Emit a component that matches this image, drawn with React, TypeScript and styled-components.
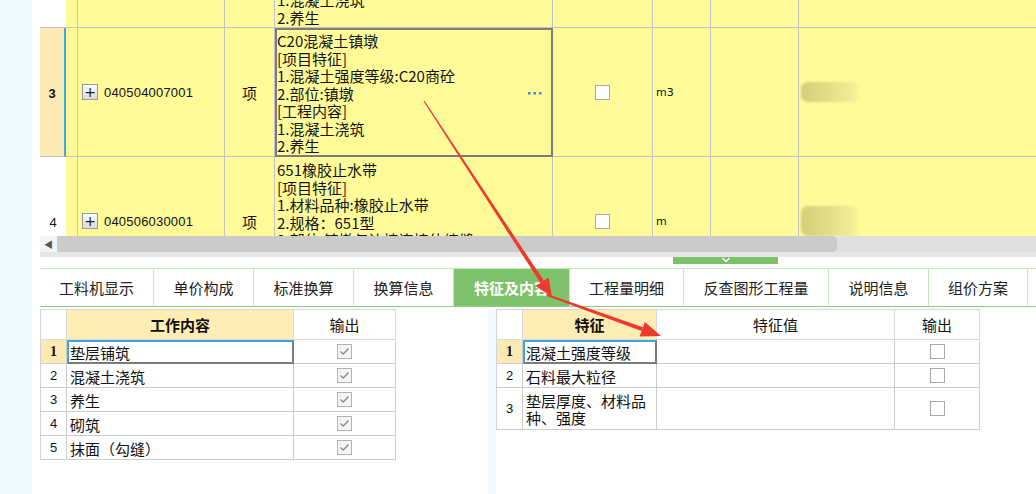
import React from 'react';
import styled, { createGlobalStyle } from 'styled-components';

const GlobalStyle = createGlobalStyle`
    html, body {
        margin: 0;
        padding: 0;
    }
    body {
        width: 1036px;
        height: 494px;
        overflow: hidden;
        background: #fff;
        color: #111;
        font-family: "Noto Sans CJK SC", "Liberation Sans", sans-serif;
    }
    * {
        box-sizing: border-box;
    }
`

const GRID_LINE = '#c3c3c3';
const YELLOW = '#fffb99';
const ACTIVE_NO = '#fde9b4';
const TOP_COLS = '26px 12px 147px 50px 278px 100px 58px 88px 1fr';

const Page = styled.div`
    position: relative;
    display: flex;
    width: 1036px;
    height: 494px;
    overflow: hidden;
`
const SideStrip = styled.div`
    width: 32px;
    flex-shrink: 0;
    background: #eefaff;
`
const Main = styled.div`
    flex: 1;
    min-width: 0;
    display: flex;
    flex-direction: column;
    padding-left: 8px;
    background: #fff;
`

/* ---------- upper grid ---------- */

const GridViewport = styled.div`
    height: 236px;
    flex-shrink: 0;
    overflow: hidden;
    display: flex;
    flex-direction: column;
`
const GridRow = styled.div<{ $h: number }>`
    display: grid;
    grid-template-columns: ${TOP_COLS};
    height: ${p => p.$h}px;
    flex-shrink: 0;
`
const NumCell = styled.div<{ $active?: boolean }>`
    display: flex;
    align-items: center;
    justify-content: center;
    background: ${p => (p.$active ? ACTIVE_NO : '#fff')};
    border-bottom: 1px solid ${GRID_LINE};
    border-right: ${p => (p.$active ? '2px solid #3aa8da' : 'none')};
    font-family: "Liberation Sans", sans-serif;
    font-size: 13px;
    font-weight: ${p => (p.$active ? 700 : 400)};
    padding-top: 2px;
`
const Cell = styled.div<{ $align?: string }>`
    display: flex;
    align-items: center;
    justify-content: ${p => p.$align || 'flex-start'};
    background: ${YELLOW};
    border-right: 1px solid ${GRID_LINE};
    border-bottom: 1px solid ${GRID_LINE};
    overflow: hidden;
`
const LastCell = styled(Cell)`
    border-right: none;
    padding-left: 2px;
`
const ExpandBox = styled.span`
    width: 16px;
    height: 16px;
    margin-left: 4px;
    margin-right: 6px;
    flex-shrink: 0;
    display: flex;
    align-items: center;
    justify-content: center;
    border: 1px solid #9a9a9a;
    background: linear-gradient(#fafafa, #dcdcdc);
    color: #222;
    font-family: "DejaVu Sans", sans-serif;
    font-size: 14px;
    line-height: 1;
`
const CodeText = styled.span`
    font-family: "Liberation Sans", sans-serif;
    font-size: 13px;
    letter-spacing: 0.2px;
    padding-top: 1px;
`
const KindText = styled.span`
    font-size: 15px;
`
const UnitText = styled.span`
    padding-left: 3px;
    font-family: "DejaVu Sans", sans-serif;
    font-size: 11px;
`
const DescCell = styled.div<{ $selected?: boolean; $bottom?: boolean }>`
    display: flex;
    align-items: ${p => (p.$bottom ? 'flex-end' : 'flex-start')};
    background: ${YELLOW};
    overflow: hidden;
    ${p =>
        p.$selected
            ? `border: 2px solid #7c7c7c; padding: 2px 0 0 0;`
            : `border-right: 1px solid ${GRID_LINE};
               border-bottom: 1px solid ${GRID_LINE};
               padding: ${p.$bottom ? '0 0 1px 2px' : '4px 0 0 2px'};`}
`
const DescText = styled.div`
    flex: 1;
    font-size: 15px;
    line-height: 17.5px;
    white-space: pre;
    color: #141414;
`
const MoreDots = styled.svg`
    align-self: center;
    margin-right: 9px;
    flex-shrink: 0;
`
const TickBox = styled.span<{ $checked?: boolean }>`
    width: 15px;
    height: 15px;
    display: flex;
    align-items: center;
    justify-content: center;
    border: 1px solid ${p => (p.$checked ? '#b3b3b3' : '#a9a9a9')};
    background: ${p => (p.$checked ? '#f4f4f4' : '#fff')};
`
const Blur = styled.span<{ $h: number }>`
    width: 60px;
    height: ${p => p.$h}px;
    border-radius: 7px;
    background: linear-gradient(to right, #d4cf7b, #e2dd87 45%, #f1ed94 85%, ${YELLOW});
    filter: blur(1.2px);
`

/* ---------- scrollbar + splitter ---------- */

const ScrollArea = styled.div`
    height: 21px;
    flex-shrink: 0;
    display: flex;
    flex-direction: column;
    background: #e6e6e6;
`
const ScrollTrack = styled.div`
    height: 16px;
    display: flex;
    background: #e0e0e0;
`
const ScrollBtn = styled.div`
    width: 17px;
    display: flex;
    align-items: center;
    justify-content: center;
    background: #f4f4f4;
    color: #555;
    font-size: 9px;
`
const ScrollThumb = styled.div`
    width: 780px;
    background: #cbcbcb;
    border-radius: 0 5px 5px 0;
`
const Splitter = styled.div`
    height: 11px;
    flex-shrink: 0;
    background: #fff;
`
const SplitHandle = styled.div`
    width: 105px;
    height: 7px;
    margin-left: 633px;
    background: #7cc16a;
    display: flex;
    justify-content: center;
`

/* ---------- tabs ---------- */

const TabBar = styled.div`
    height: 39px;
    flex-shrink: 0;
    display: flex;
    border-top: 1px solid #c9eac0;
    border-bottom: 1px solid #8fd07f;
`
const Tab = styled.div<{ $w: number; $active?: boolean }>`
    width: ${p => p.$w}px;
    display: flex;
    align-items: center;
    justify-content: center;
    border-right: 1px solid #c9eac0;
    background: ${p => (p.$active ? '#7ec36c' : '#fff')};
    color: ${p => (p.$active ? '#fff' : '#222')};
    font-weight: ${p => (p.$active ? 700 : 400)};
    font-size: 15px;
`

/* ---------- lower tables ---------- */

const Lower = styled.div`
    flex: 1;
    display: flex;
`
const Pane = styled.div<{ $w?: number }>`
    ${p => (p.$w ? `width: ${p.$w}px;` : 'flex: 1;')}
    padding-top: 2px;
`
const PaneDivider = styled.div`
    width: 8px;
    margin-top: 2px;
    background: #f1fbff;
`
const Table = styled.div<{ $cols: string }>`
    display: grid;
    grid-template-columns: ${p => p.$cols};
    width: max-content;
    border-left: 1px solid #d4d4d4;
    border-top: 1px solid #d4d4d4;
`
const HeadCell = styled.div<{ $key?: boolean }>`
    height: 30px;
    display: flex;
    align-items: center;
    justify-content: center;
    border-right: 1px solid #dadada;
    border-bottom: 1px solid #dadada;
    background: ${p => (p.$key ? '#ffedb5' : '#fff')};
    font-weight: ${p => (p.$key ? 700 : 400)};
    font-size: 15px;
`
const BodyNo = styled.div<{ $h: number; $active?: boolean }>`
    height: ${p => p.$h}px;
    display: flex;
    align-items: center;
    justify-content: center;
    border-right: 1px solid #cdcdcd;
    border-bottom: 1px solid #cdcdcd;
    background: ${p => (p.$active ? ACTIVE_NO : '#fff')};
    font-family: ${p => (p.$active ? '"Liberation Serif", serif' : '"Liberation Sans", sans-serif')};
    font-weight: ${p => (p.$active ? 700 : 400)};
    font-size: ${p => (p.$active ? 14 : 13)}px;
`
const BodyText = styled.div<{ $h: number; $selected?: boolean }>`
    height: ${p => p.$h}px;
    display: flex;
    align-items: center;
    font-size: 15px;
    line-height: 17px;
    ${p =>
        p.$selected
            ? `border: 2px solid; border-color: #3ea6d8 #7b7b7b #7b7b7b #3ea6d8; padding: 1px 0 0 1px;`
            : `border-right: 1px solid #cdcdcd; border-bottom: 1px solid #cdcdcd; padding: 1px 0 0 3px;`}
`
const BodyCheck = styled.div<{ $h: number }>`
    height: ${p => p.$h}px;
    display: flex;
    align-items: center;
    justify-content: center;
    border-right: 1px solid #cdcdcd;
    border-bottom: 1px solid #cdcdcd;
`

const Overlay = styled.svg`
    position: absolute;
    left: 0;
    top: 0;
    pointer-events: none;
`

/* ---------- data ---------- */

interface TopRow {
    no: string;
    code?: string;
    kind?: string;
    unit?: string;
    desc: string[];
    height: number;
    partial?: boolean;
    selected?: boolean;
    blur?: number;
}

const topRows: TopRow[] = [
    { no: '', desc: ['1.混凝土浇筑', '2.养生'], height: 28, partial: true },
    {
        no: '3',
        code: '040504007001',
        kind: '项',
        unit: 'm3',
        height: 129,
        selected: true,
        blur: 20,
        desc: ['C20混凝土镇墩', '[项目特征]', '1.混凝土强度等级:C20商砼', '2.部位:镇墩', '[工程内容]', '1.混凝土浇筑', '2.养生'],
    },
    {
        no: '4',
        code: '040506030001',
        kind: '项',
        unit: 'm',
        height: 129,
        blur: 30,
        desc: ['651橡胶止水带', '[项目特征]', '1.材料品种:橡胶止水带', '2.规格：651型', '3.部位:镇墩与边墙连接伸缩缝', '[工程内容]', '1.安装'],
    },
];

const tabs = [
    { label: '工料机显示', w: 114 },
    { label: '单价构成', w: 100 },
    { label: '标准换算', w: 100 },
    { label: '换算信息', w: 100 },
    { label: '特征及内容', w: 116, active: true },
    { label: '工程量明细', w: 114 },
    { label: '反查图形工程量', w: 145 },
    { label: '说明信息', w: 100 },
    { label: '组价方案', w: 99 },
];

const workItems = ['垫层铺筑', '混凝土浇筑', '养生', '砌筑', '抹面（勾缝）'];

const features = [
    { name: '混凝土强度等级', h: 24 },
    { name: '石料最大粒径', h: 24 },
    { name: '垫层厚度、材料品种、强度', h: 42 },
];

const Check: React.FC<{ checked?: boolean }> = ({ checked }) => (
    <TickBox $checked={checked}>
        {checked && (
            <svg width="11" height="9" viewBox="0 0 11 9">
                <polyline points="1.5,4.5 4.2,7 9.5,1.5" fill="none" stroke="#8a8a8a" strokeWidth="1.3" />
            </svg>
        )}
    </TickBox>
);

const App: React.FC = () => {
    return (
        <Page>
            <GlobalStyle />
            <SideStrip />
            <Main>
                <GridViewport>
                    {topRows.map((row, i) => (
                        <GridRow key={i} $h={row.height}>
                            <NumCell $active={row.selected}>{row.no}</NumCell>
                            <Cell />
                            <Cell>
                                {row.code && (
                                    <>
                                        <ExpandBox>+</ExpandBox>
                                        <CodeText>{row.code}</CodeText>
                                    </>
                                )}
                            </Cell>
                            <Cell $align="center">
                                <KindText>{row.kind}</KindText>
                            </Cell>
                            <DescCell $selected={row.selected} $bottom={row.partial}>
                                <DescText>{row.desc.join('\n')}</DescText>
                                {row.selected && (
                                    <MoreDots width="14" height="3" viewBox="0 0 14 3">
                                        <rect x="0" y="0" width="2.5" height="2.5" fill="#3b8fd9" />
                                        <rect x="5.5" y="0" width="2.5" height="2.5" fill="#3b8fd9" />
                                        <rect x="11" y="0" width="2.5" height="2.5" fill="#3b8fd9" />
                                    </MoreDots>
                                )}
                            </DescCell>
                            <Cell $align="center">{row.code && <Check />}</Cell>
                            <Cell>
                                <UnitText>{row.unit}</UnitText>
                            </Cell>
                            <Cell />
                            <LastCell>{row.blur && <Blur $h={row.blur} />}</LastCell>
                        </GridRow>
                    ))}
                </GridViewport>

                <ScrollArea>
                    <ScrollTrack>
                        <ScrollBtn>◀</ScrollBtn>
                        <ScrollThumb />
                    </ScrollTrack>
                </ScrollArea>

                <Splitter>
                    <SplitHandle>
                        <svg width="10" height="7" viewBox="0 0 10 7">
                            <polyline points="1.5,1 5,4.5 8.5,1" fill="none" stroke="#fff" strokeWidth="1.4" />
                        </svg>
                    </SplitHandle>
                </Splitter>

                <TabBar>
                    {tabs.map(t => (
                        <Tab key={t.label} $w={t.w} $active={t.active}>
                            {t.label}
                        </Tab>
                    ))}
                </TabBar>

                <Lower>
                    <Pane $w={448}>
                        <Table $cols="26px 227px 102px">
                            <HeadCell />
                            <HeadCell $key>工作内容</HeadCell>
                            <HeadCell>输出</HeadCell>
                            {workItems.map((item, i) => (
                                <React.Fragment key={item}>
                                    <BodyNo $h={24} $active={i === 0}>{i + 1}</BodyNo>
                                    <BodyText $h={24} $selected={i === 0}>{item}</BodyText>
                                    <BodyCheck $h={24}>
                                        <Check checked />
                                    </BodyCheck>
                                </React.Fragment>
                            ))}
                        </Table>
                    </Pane>
                    <PaneDivider />
                    <Pane>
                        <Table $cols="26px 134px 238px 85px">
                            <HeadCell />
                            <HeadCell $key>特征</HeadCell>
                            <HeadCell>特征值</HeadCell>
                            <HeadCell>输出</HeadCell>
                            {features.map((f, i) => (
                                <React.Fragment key={f.name}>
                                    <BodyNo $h={f.h} $active={i === 0}>{i + 1}</BodyNo>
                                    <BodyText $h={f.h} $selected={i === 0}>{f.name}</BodyText>
                                    <BodyText $h={f.h} />
                                    <BodyCheck $h={f.h}>
                                        <Check />
                                    </BodyCheck>
                                </React.Fragment>
                            ))}
                        </Table>
                    </Pane>
                </Lower>
            </Main>

            {/* red annotation arrows drawn over the screenshot */}
            <Overlay width="1036" height="494" viewBox="0 0 1036 494">
                <polygon points="423.5,101.3 424.5,100.7 543.9,280.8 540.5,283" fill="#ee3a2e" />
                <polygon points="552,297 535.8,286 548.6,277.6" fill="#ee3a2e" />
                <polygon points="546.7,295.9 547.3,294.1 642.9,327.3 641.5,331.1" fill="#ee3a2e" />
                <polygon points="661,336 644.9,322 639.5,336.4" fill="#ee3a2e" />
            </Overlay>
        </Page>
    );
};

export default App;
